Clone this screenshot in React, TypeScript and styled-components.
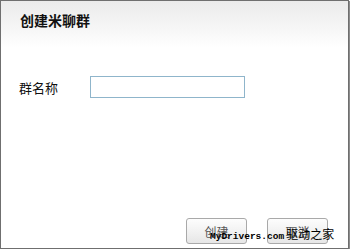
import styled, { createGlobalStyle } from "styled-components";

const GlobalStyle = createGlobalStyle`
  html, body {
    margin: 0;
    padding: 0;
    background: #ffffff;
  }
  body {
    font-family: "Liberation Sans", "Noto Sans CJK SC", sans-serif;
  }
`;

const Dialog = styled.div`
  position: relative;
  box-sizing: border-box;
  width: 349px;
  height: 249px;
  border: 1px solid #6f6f6f;
  box-shadow: 1px 1px 0 #8c8c8c;
  background: #ffffff;
  display: flex;
  flex-direction: column;
`;

const Header = styled.div`
  height: 46px;
  box-sizing: border-box;
  padding: 11px 0 0 19px;
  background: linear-gradient(to bottom, #ebebeb 0%, #f6f6f6 60%, #ffffff 100%);
`;

const Title = styled.h1`
  margin: 0;
  font-size: 14px;
  line-height: 16px;
  font-weight: bold;
  color: #111111;
  font-family: "Noto Sans CJK SC", sans-serif;
`;

const Body = styled.div`
  padding: 29px 0 0 18px;
`;

const FieldRow = styled.div`
  display: flex;
  align-items: center;
`;

const Label = styled.label`
  width: 71px;
  font-size: 13px;
  color: #111111;
  font-family: "Noto Sans CJK SC", sans-serif;
`;

const TextInput = styled.input`
  box-sizing: border-box;
  width: 155px;
  height: 22px;
  margin: 0;
  padding: 0 4px;
  border: 1px solid #8fb5cb;
  outline: none;
  font-size: 12px;
`;

const Footer = styled.div`
  margin-top: auto;
  display: flex;
  justify-content: flex-end;
  gap: 20px;
  padding: 0 20px 4px 0;
`;

const Button = styled.button`
  box-sizing: border-box;
  width: 61px;
  height: 26px;
  padding: 0;
  border: 1px solid #a9a9a9;
  border-radius: 3px;
  background: linear-gradient(to bottom, #fdfdfd 0%, #f1f1f1 55%, #e6e6e6 100%);
  color: #555555;
  font-size: 12px;
  font-family: "Noto Sans CJK SC", sans-serif;
`;

/* site watermark stamped over the footer in the screenshot */
const Watermark = styled.div`
  position: absolute;
  left: 209px;
  top: 224px;
  display: flex;
  align-items: baseline;
  gap: 2px;
  color: #000000;
  pointer-events: none;
`;

const MarkLatin = styled.span`
  font-family: "Liberation Mono", monospace;
  font-size: 9.5px;
  font-weight: bold;
`;

const MarkCjk = styled.span`
  font-family: "Noto Sans CJK SC", sans-serif;
  font-size: 12px;
`;

export default function App() {
  return (
    <>
      <GlobalStyle />
      <Dialog>
        <Header>
          <Title>创建米聊群</Title>
        </Header>
        <Body>
          <FieldRow>
            <Label>群名称</Label>
            <TextInput type="text" />
          </FieldRow>
        </Body>
        <Footer>
          <Button>创建</Button>
          <Button>取消</Button>
        </Footer>
        <Watermark>
          <MarkLatin>MyDrivers.com</MarkLatin>
          <MarkCjk>驱动之家</MarkCjk>
        </Watermark>
      </Dialog>
    </>
  );
}
